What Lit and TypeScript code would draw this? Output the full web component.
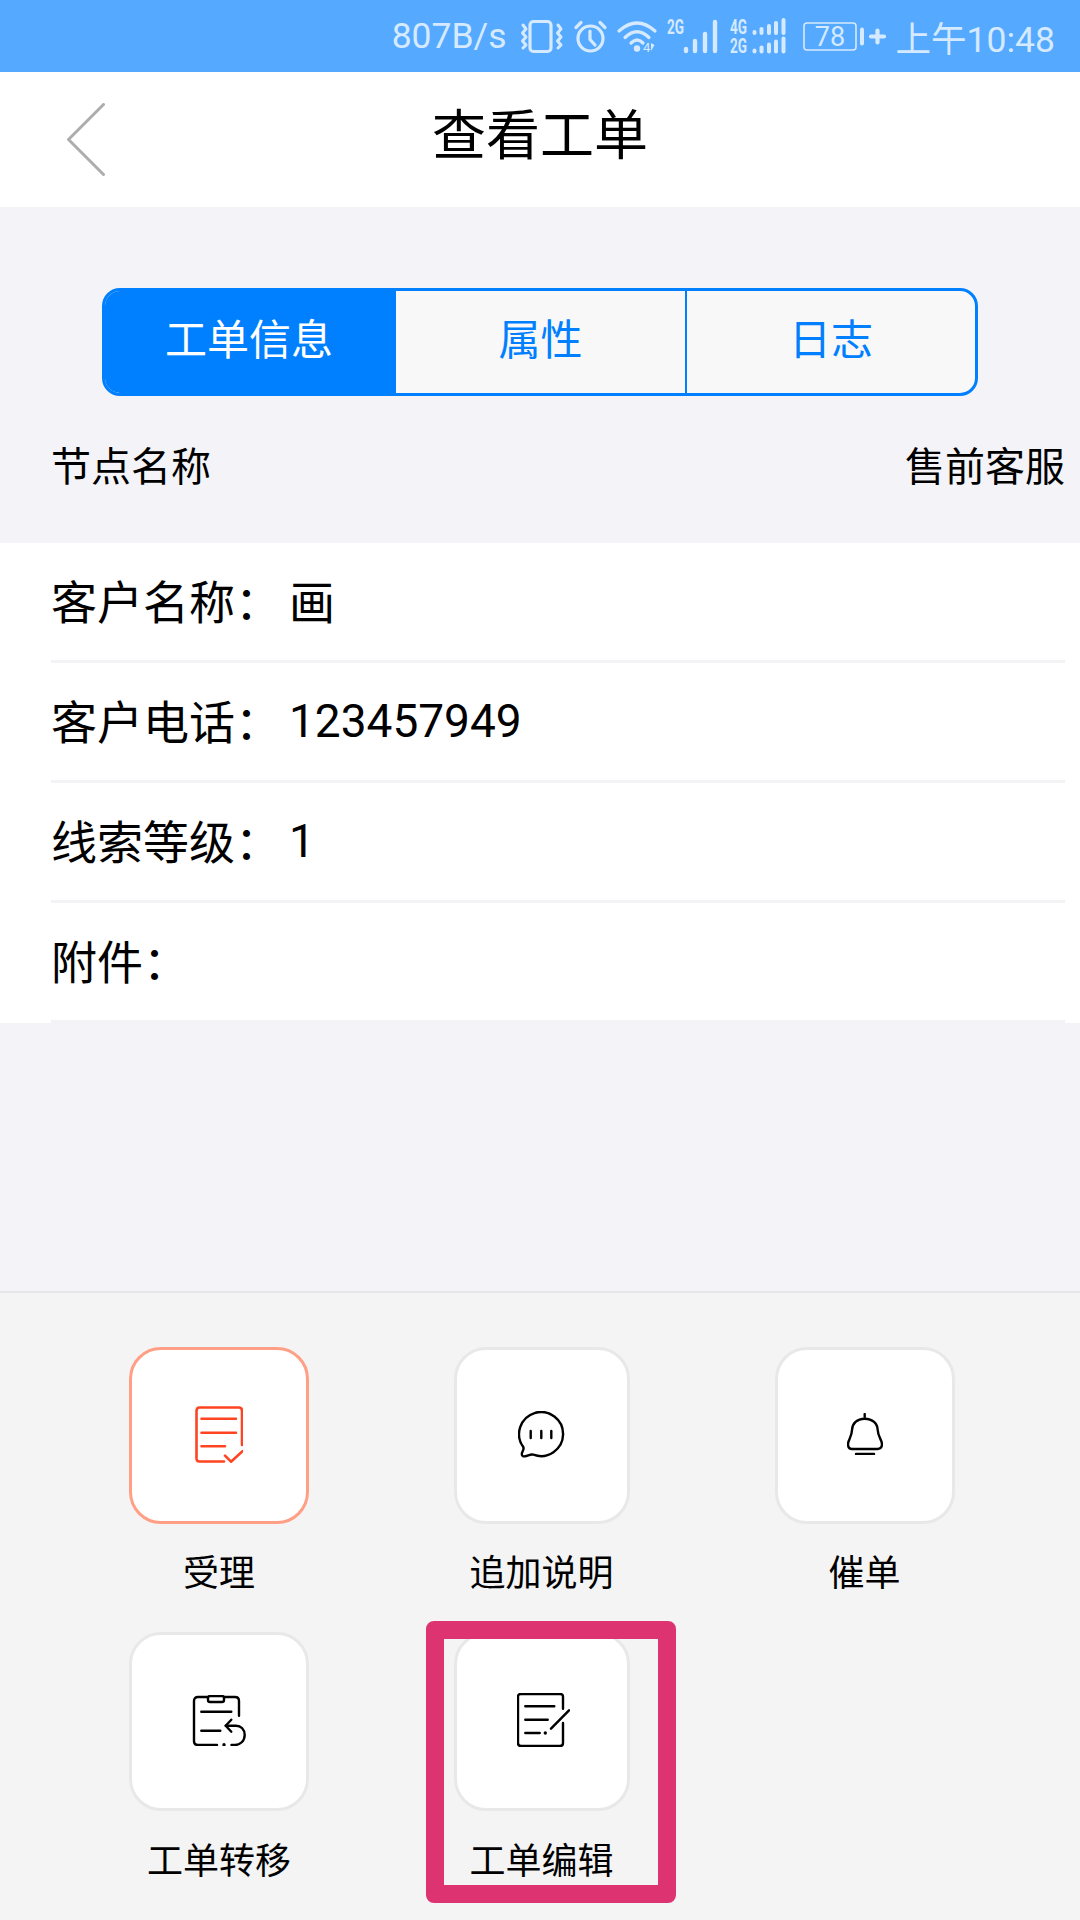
import { LitElement, html, css, svg } from 'lit';
import { customElement } from 'lit/decorators.js';
import { classMap } from 'lit/directives/class-map.js';

const barHeights = [3, 6, 9, 12, 15];
const barX = [24.5, 31.5, 39, 46, 53.5];

const vibrateIcon = svg`<svg class="st" width="44" height="33" viewBox="0 0 44 33" fill="none" stroke="currentColor" stroke-width="3" stroke-linecap="round" stroke-linejoin="round">
  <rect x="10" y="1.5" width="21" height="30" rx="3.5" stroke-width="3.2"/>
  <path d="M3 5l3 4-3.5 4 3.5 4-3.5 4 3.5 4-3 3"/>
  <path d="M38 5l3 4-3.5 4 3.5 4-3.5 4 3.5 4-3 3"/>
</svg>`;

const alarmIcon = svg`<svg class="st" width="33" height="33" viewBox="0 0 33 33" fill="none" stroke="currentColor" stroke-width="3.2" stroke-linecap="round" stroke-linejoin="round">
  <circle cx="16.5" cy="18.5" r="12.5"/>
  <path d="M16 11v8.5l5 5.5"/>
  <path d="M2 7.5L7 2.5M31 7.5L26 2.5"/>
</svg>`;

const wifiIcon = svg`<svg class="st" width="40" height="33" viewBox="0 0 40 33" fill="none" stroke="currentColor" stroke-width="3.2" stroke-linecap="round">
  <path d="M2 11Q20-5 38 11"/>
  <path d="M8 17.5Q20 6 32 17.5"/>
  <path d="M14 23Q20 17 26 23"/>
  <circle cx="20" cy="28.5" r="3.2" fill="currentColor" stroke="none"/>
  <text x="26" y="32" font-size="13" font-family="Roboto" fill="currentColor" stroke="none">4</text>
  <path d="M34 23v8l3.5-6z" fill="currentColor" stroke="none"/>
</svg>`;

const signalIcon = svg`<svg class="st" width="51" height="34" viewBox="0 0 51 34" fill="none" stroke="currentColor" stroke-width="4.4" stroke-linecap="round">
  <text x="0" y="15" font-size="20" font-weight="700" font-family="Roboto" fill="currentColor" stroke="none" textLength="17" lengthAdjust="spacingAndGlyphs">2G</text>
  <path d="M19 32v-2M28 32v-10M38 32v-17M48 32V3"/>
</svg>`;

const dualSignalIcon = svg`<svg class="st dual" width="57" height="34" viewBox="0 0 57 34" fill="none" stroke="currentColor" stroke-width="4" stroke-linecap="round">
  <text x="0" y="15" font-size="20" font-weight="700" font-family="Roboto" fill="currentColor" stroke="none" textLength="17" lengthAdjust="spacingAndGlyphs">4G</text>
  <text x="0" y="33.5" font-size="20" font-weight="700" font-family="Roboto" fill="currentColor" stroke="none" textLength="17" lengthAdjust="spacingAndGlyphs">2G</text>
  ${barX.map((x, i) => svg`
    <path d="M${x} 14v-${barHeights[i] - 2}"/>
    <path d="M${x} 32.5v-${barHeights[i] - 2}"/>
  `)}
</svg>`;

const batteryIcon = svg`<svg class="st battery" width="61" height="29" viewBox="0 0 61 29" fill="none" stroke="currentColor" stroke-width="1.6">
  <rect x="1" y="1" width="52" height="27" rx="3"/>
  <text x="27" y="23.5" text-anchor="middle" font-size="27" font-family="Roboto" fill="currentColor" stroke="none">78</text>
  <path d="M59 7.5v14" stroke-width="4" stroke-linecap="round"/>
</svg>`;

const plusIcon = svg`<svg class="st plus" width="17" height="17" viewBox="0 0 17 17" fill="none" stroke="currentColor" stroke-width="4.2" stroke-linecap="round">
  <path d="M2 8.5h13M8.5 2.5v12"/>
</svg>`;

const backIcon = svg`<svg width="38" height="73" viewBox="0 0 38 73" fill="none" stroke="#adadad" stroke-width="3" stroke-linejoin="round" stroke-linecap="round">
  <path d="M36.5 1.5L1.5 36.5l35 35"/>
</svg>`;

const acceptIcon = svg`<svg width="48" height="57" viewBox="0 0 48 57" fill="none" stroke="#ff4422" stroke-width="2.6" stroke-linecap="round" stroke-linejoin="round">
  <path d="M29 55.5H4.5Q1.5 55.5 1.5 52.5V5Q1.5 1.5 4.5 1.5H44Q47 1.5 47 5V39"/>
  <path d="M6.5 12.7H41M6.5 26.7H41M6.5 40.3H30"/>
  <path d="M30 49.7l6 6 11.5-10.5"/>
</svg>`;

const noteIcon = svg`<svg width="47" height="47" viewBox="0 0 47 47" fill="none" stroke="#000" stroke-width="2.4" stroke-linecap="round" stroke-linejoin="round">
  <path d="M15.5 43.7A22 22 0 1 0 5.3 36C6.5 39 4 40 3.8 43C3.8 45 5 45.5 7 45.3C10 45 12.5 42.5 15.5 43.7Z"/>
  <path d="M12.7 20v7M23.3 20v7M33.3 20v7"/>
</svg>`;

const bellIcon = svg`<svg width="36" height="42" viewBox="0 0 36 42" fill="none" stroke="#000" stroke-width="2.4" stroke-linecap="round" stroke-linejoin="round">
  <path d="M17.7 1v3"/>
  <path d="M17.7 5.7C10 5.7 5.2 10.5 5 17C4.8 24 1 27 1 31C1 34.5 3 36 5 36H30.5C33 36 35 34.5 35 31C35 27 31 24 30.7 17C30.5 10.5 25.5 5.7 17.7 5.7Z"/>
  <path d="M9 41H27"/>
</svg>`;

const transferIcon = svg`<svg width="54" height="51" viewBox="0 0 54 51" fill="none" stroke="#000" stroke-width="2.4" stroke-linecap="round" stroke-linejoin="round">
  <rect x="16" y="1" width="16" height="6" rx="2"/>
  <path d="M16 2H6Q2 2 2 6V46Q2 50 6 50H25"/>
  <path d="M32 2H43Q47 2 47 6V20.7"/>
  <path d="M9.3 16.7H39.3M9.3 35.7H28.3"/>
  <path d="M39.3 24.7l-5.6 6 5.6 6"/>
  <path d="M33.7 30.7H44C49 30.7 52.7 34.5 52.7 40C52.7 46 48 50 43 50H39.5"/>
  <circle cx="32" cy="49.7" r="1.7" fill="#000" stroke="none"/>
</svg>`;

const editIcon = svg`<svg class="shifted" width="53" height="54" viewBox="0 0 53 54" fill="none" stroke="#000" stroke-width="2.4" stroke-linecap="round" stroke-linejoin="round">
  <path d="M46 15.7V4Q46 1 43 1H4Q1 1 1 4V50Q1 53 4 53H43Q46 53 46 50V30"/>
  <path d="M8.3 13.3H37.3M8.3 26.7H30.7M8.3 40H22.7"/>
  <circle cx="28.3" cy="40" r="1.7" fill="#000" stroke="none"/>
  <path d="M34 35.7L52 17.3"/>
</svg>`;

const fields = [
  { label: '客户名称：', value: '画' },
  { label: '客户电话：', value: '123457949' },
  { label: '线索等级：', value: '1' },
  { label: '附件：', value: '' },
];

const actions = [
  { label: '受理', icon: acceptIcon, width: 180, height: 177, active: true },
  { label: '追加说明', icon: noteIcon, width: 176, height: 177 },
  { label: '催单', icon: bellIcon, width: 180, height: 177 },
  { label: '工单转移', icon: transferIcon, width: 180, height: 179 },
  { label: '工单编辑', icon: editIcon, width: 176, height: 179, marked: true },
];

@customElement('app-root')
export class AppRoot extends LitElement {
  static styles = css`
    :host {
      display: flex;
      flex-direction: column;
      width: 1080px;
      height: 1920px;
      overflow: hidden;
      background: #f3f3f8;
      color: #000;
      font-family: Roboto, "Noto Sans CJK SC", sans-serif;
    }

    .status {
      display: flex;
      justify-content: flex-end;
      align-items: center;
      gap: 10px;
      height: 72px;
      flex: none;
      padding-right: 25px;
      box-sizing: border-box;
      background: #55a9ff;
      color: #d6eaff;
    }
    .speed {
      font-size: 35.5px;
      margin-right: 3px;
    }
    .time {
      font-size: 35.5px;
    }
    .st {
      display: block;
      flex: none;
      overflow: visible;
    }
    .dual {
      margin-left: 2px;
    }
    .battery {
      margin-left: 6px;
    }
    .plus {
      margin-left: -5px;
    }

    .header {
      display: grid;
      grid-template-columns: 1fr auto 1fr;
      align-items: center;
      height: 135px;
      flex: none;
      padding-left: 67px;
      box-sizing: border-box;
      background: #fff;
    }
    .back {
      display: flex;
      align-items: center;
    }
    .title {
      font-size: 54px;
      line-height: 1;
      margin-left: -67px;
      padding-bottom: 6px;
    }

    .tabs {
      display: flex;
      flex: none;
      width: 876px;
      height: 108px;
      margin: 81px 0 0 102px;
      box-sizing: border-box;
      border: 3px solid #0080ff;
      border-radius: 18px;
      overflow: hidden;
      background: #f8f8f8;
    }
    .tab {
      display: flex;
      justify-content: center;
      align-items: center;
      padding-bottom: 12px;
      font-size: 42px;
      color: #0080ff;
      box-sizing: border-box;
    }
    .tab:nth-child(1) {
      width: 291px;
      padding-right: 3px;
    }
    .tab:nth-child(2) {
      width: 291px;
      border-right: 2px solid #0080ff;
    }
    .tab:nth-child(3) {
      flex: 1;
    }
    .tab.selected {
      background: #0080ff;
      color: #fff;
    }

    .node {
      display: flex;
      justify-content: space-between;
      align-items: center;
      height: 136px;
      flex: none;
      margin-bottom: 11px;
      padding: 0 15px 0 51px;
      box-sizing: border-box;
      font-size: 40px;
    }

    .fields {
      flex: none;
      background: #fff;
      padding: 0 15px 0 51px;
    }
    .field {
      display: flex;
      align-items: center;
      height: 120px;
      box-sizing: border-box;
      padding-bottom: 6px;
      border-bottom: 3px solid #f3f3f5;
      font-size: 46px;
    }
    .value {
      margin-left: 8px;
    }
    .value.num {
      padding-top: 5px;
    }

    .spacer {
      flex: 1;
    }

    .panel {
      display: grid;
      grid-template-columns: 322px 323px 323px;
      grid-template-rows: 253px 256px;
      row-gap: 32px;
      align-content: start;
      height: 629px;
      flex: none;
      padding: 54px 0 0 58px;
      box-sizing: border-box;
      border-top: 2px solid #e6e6e8;
      background: #f4f4f5;
    }
    .action {
      position: relative;
      display: flex;
      flex-direction: column;
      align-items: center;
    }
    .tile {
      display: flex;
      justify-content: center;
      align-items: center;
      padding-bottom: 3px;
      box-sizing: border-box;
      border: 3px solid #e8e8e8;
      border-radius: 32px;
      background: #fff;
    }
    .tile.active {
      border-color: #ff9f85;
    }
    .shifted {
      margin-left: 4px;
    }
    .label {
      margin-top: auto;
      font-size: 36px;
      line-height: 52px;
    }
    .mark {
      position: absolute;
      left: 46px;
      top: -11px;
      width: 250px;
      height: 282px;
      box-sizing: border-box;
      border: 18px solid #dd3371;
      border-radius: 8px;
    }
  `;

  render() {
    return html`
      <div class="status" lang="zh-CN">
        <span class="speed">807B/s</span>
        ${vibrateIcon}${alarmIcon}${wifiIcon}${signalIcon}${dualSignalIcon}${batteryIcon}${plusIcon}
        <span class="time">上午10:48</span>
      </div>
      <div class="header" lang="zh-CN">
        <div class="back">${backIcon}</div>
        <div class="title">查看工单</div>
      </div>
      <div class="tabs" lang="zh-CN">
        <div class="tab selected">工单信息</div>
        <div class="tab">属性</div>
        <div class="tab">日志</div>
      </div>
      <div class="node" lang="zh-CN">
        <span>节点名称</span>
        <span>售前客服</span>
      </div>
      <div class="fields" lang="zh-CN">
        ${fields.map(f => html`
          <div class="field">
            <span>${f.label}</span>
            <span class="${classMap({ value: true, num: /^\d+$/.test(f.value) })}">${f.value}</span>
          </div>
        `)}
      </div>
      <div class="spacer"></div>
      <div class="panel" lang="zh-CN">
        ${actions.map(a => html`
          <div class="action">
            <div
              class="${classMap({ tile: true, active: !!a.active })}"
              style="width:${a.width}px;height:${a.height}px"
            >${a.icon}</div>
            <div class="label">${a.label}</div>
            ${a.marked ? html`<div class="mark"></div>` : ''}
          </div>
        `)}
      </div>
    `;
  }
}
